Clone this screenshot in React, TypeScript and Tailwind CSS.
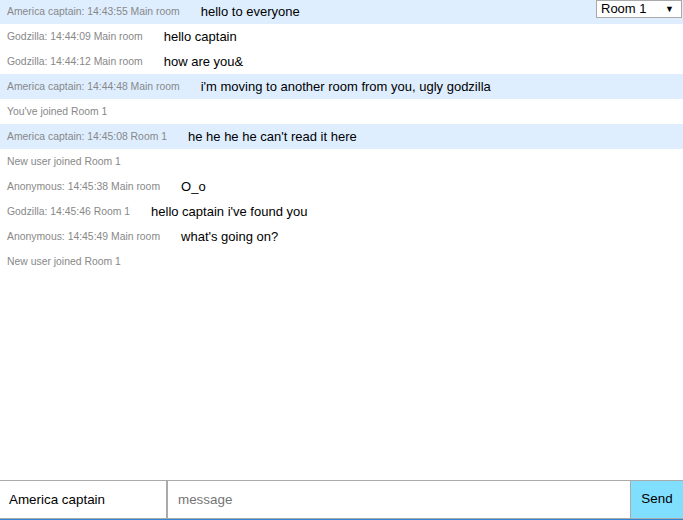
import React from 'react';

type Msg = {
  kind: 'msg' | 'info';
  meta?: string;
  text: string;
  mine?: boolean;
};

const messages: Msg[] = [
  { kind: 'msg', meta: 'America captain: 14:43:55 Main room', text: 'hello to everyone', mine: true },
  { kind: 'msg', meta: 'Godzilla: 14:44:09 Main room', text: 'hello captain' },
  { kind: 'msg', meta: 'Godzilla: 14:44:12 Main room', text: 'how are you&' },
  { kind: 'msg', meta: 'America captain: 14:44:48 Main room', text: "i'm moving to another room from you, ugly godzilla", mine: true },
  { kind: 'info', text: "You've joined Room 1" },
  { kind: 'msg', meta: 'America captain: 14:45:08 Room 1', text: "he he he he can't read it here", mine: true },
  { kind: 'info', text: 'New user joined Room 1' },
  { kind: 'msg', meta: 'Anonymous: 14:45:38 Main room', text: 'O_o' },
  { kind: 'msg', meta: 'Godzilla: 14:45:46 Room 1', text: "hello captain i've found you" },
  { kind: 'msg', meta: 'Anonymous: 14:45:49 Main room', text: "what's going on?" },
  { kind: 'info', text: 'New user joined Room 1' },
];

const App: React.FC = () => {
  return (
    <div className="relative flex h-[520px] w-[683px] flex-col overflow-hidden bg-white font-['Liberation_Sans',Arial,sans-serif]">
      <select
        defaultValue="Room 1"
        className="absolute right-px top-0 h-[18px] w-[86px] appearance-none border border-[#a9a9a9] bg-white pl-[4px] text-[13px] leading-[16px] text-black"
      >
        <option>Main room</option>
        <option>Room 1</option>
      </select>
      <span className="pointer-events-none absolute right-[9px] top-[2px] text-[9px] leading-[14px] text-black">▼</span>

      <ul className="-mt-px flex-1">
        {messages.map((m, i) => (
          <li
            key={i}
            className={`flex h-[25px] items-center px-[7px] ${m.mine ? 'bg-[#deeeff]' : ''}`}
          >
            {m.kind === 'info' ? (
              <span className="text-[10.4px] text-[#888]">{m.text}</span>
            ) : (
              <>
                <span className="mr-[21px] text-[10.4px] text-[#888]">{m.meta}</span>
                <span className="text-[13px] text-black">{m.text}</span>
              </>
            )}
          </li>
        ))}
      </ul>

      <form className="flex h-[40px] border-t border-b border-t-[#aaa] border-b-[#2f86d4]" onSubmit={(e) => e.preventDefault()}>
        <input
          defaultValue="America captain"
          className="h-full w-[168px] border-r-2 border-b border-r-[#aaa] border-b-[#aaa] px-[9px] text-[13.4px] text-black outline-none"
        />
        <input
          placeholder="message"
          className="h-full flex-1 border-r border-b border-[#aaa] px-[10px] text-[13.4px] text-black outline-none placeholder:text-[#757575]"
        />
        <button type="submit" className="h-full w-[52px] border-b border-b-[#aaa] bg-[#80dfff] text-[13.4px] text-black">
          Send
        </button>
      </form>
    </div>
  );
};

export default App;
